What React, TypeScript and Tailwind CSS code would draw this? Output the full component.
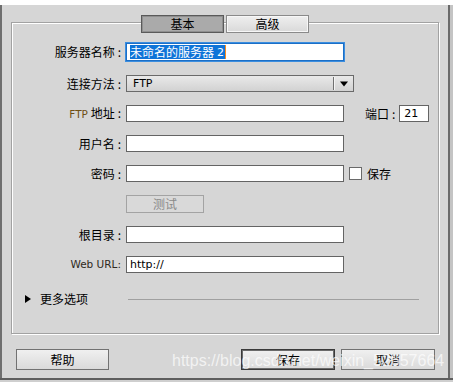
export default function App() {
  const lat = "font-['DejaVu_Sans',sans-serif]";
  return (
    <div className="relative w-[453px] h-[382px] overflow-hidden bg-[#d6d6d6] font-['Noto_Sans_CJK_SC','Noto_Sans',sans-serif] text-[12px] leading-none text-black flex flex-col">
      <div className="h-[5px] shrink-0 bg-white" />
      <div className="flex flex-1 min-h-0">
        <div className="w-[2px] bg-[#6f6f6f]" />
        <div className="flex-1 flex flex-col">
          {/* group frame */}
          <div className="ml-[9px] mt-[17px] w-[428px] h-[312px] border border-[#a2a2a2] shadow-[1px_1px_0_#ffffff,inset_1px_1px_0_#ffffff] flex flex-col">
            {/* tabs */}
            <div className="-mt-[8px] flex justify-center gap-[2px]">
              <div className="w-[83px] h-[18px] flex items-center justify-center bg-[#aaaaaa] border border-[#5a5a5a] shadow-[inset_0_0_0_1px_#8f8f8f]">基本</div>
              <div className="w-[83px] h-[18px] flex items-center justify-center bg-gradient-to-b from-[#efefef] to-[#d9d9d9] border border-[#8a8a8a] shadow-[inset_0_0_0_1px_#f7f7f7]">高级</div>
            </div>

            {/* row 1 */}
            <div className="mt-[10px] h-[18px] flex items-center">
              <div className="w-[109px] text-right">服务器名称<span className="ml-[3px]">:</span></div>
              <div className="ml-[5px] w-[218px] h-[18px] bg-white border border-[#1c6fc6] ring-1 ring-[#3b8ee0] flex items-center pl-[3px]">
                <span className="h-[14px] bg-[#0f74d8] text-white flex items-center pr-[1px]">未命名的服务器 <span className={`${lat} text-[11px] ml-[3px]`}>2</span></span>
                <span className="w-[1px] h-[14px] bg-[#ff8c1a]" />
              </div>
            </div>

            {/* row 2 select */}
            <div className="mt-[14px] h-[17px] flex items-center">
              <div className="w-[109px] text-right">连接方法<span className="ml-[3px]">:</span></div>
              <div className="ml-[5px] w-[228px] h-[17px] border border-[#6a6a6a] bg-gradient-to-b from-[#e9e9e9] to-[#d2d2d2] flex items-center">
                <span className={`${lat} text-[11px] pl-[6px] flex-1`}>FTP</span>
                <span className="w-[1px] h-[13px] bg-[#707070]" />
                <span className="w-[1px] h-[13px] bg-[#f4f4f4]" />
                <svg width="18" height="6" viewBox="0 0 18 6" className="shrink-0">
                  <path d="M5 0.5 H13 L9 5.5 Z" fill="#000" />
                </svg>
              </div>
            </div>

            {/* row 3 */}
            <div className="mt-[13px] h-[17px] flex items-center">
              <div className="w-[109px] text-right">
                <span className={`${lat} text-[10.5px] text-[#6e4f14]`}>FTP</span> 地址<span className="ml-[3px]">:</span>
              </div>
              <div className="ml-[5px] w-[218px] h-[17px] bg-white border border-[#646464]" />
              <div className="ml-[21px]">端口<span className="ml-[3px]">:</span></div>
              <div className={`ml-[4px] w-[30px] h-[17px] bg-white border border-[#646464] flex items-center pl-[4px] ${lat} text-[11px]`}>21</div>
            </div>

            {/* row 4 */}
            <div className="mt-[13px] h-[17px] flex items-center">
              <div className="w-[109px] text-right">用户名<span className="ml-[3px]">:</span></div>
              <div className="ml-[5px] w-[218px] h-[17px] bg-white border border-[#646464]" />
            </div>

            {/* row 5 */}
            <div className="mt-[13px] h-[17px] flex items-center">
              <div className="w-[109px] text-right">密码<span className="ml-[3px]">:</span></div>
              <div className="ml-[5px] w-[218px] h-[17px] bg-white border border-[#646464]" />
              <div className="ml-[5px] w-[13px] h-[13px] bg-white border border-[#6a6a6a]" />
              <div className="ml-[5px]">保存</div>
            </div>

            {/* test button */}
            <div className="mt-[13px] h-[18px] flex items-center">
              <div className="w-[109px]" />
              <div className="ml-[5px] w-[78px] h-[18px] border border-[#a3a3a3] bg-[#d9d9d9] flex items-center justify-center text-[#8a8a8a]">测试</div>
            </div>

            {/* row 6 */}
            <div className="mt-[13px] h-[17px] flex items-center">
              <div className="w-[109px] text-right">根目录<span className="ml-[3px]">:</span></div>
              <div className="ml-[5px] w-[218px] h-[17px] bg-white border border-[#646464]" />
            </div>

            {/* row 7 */}
            <div className="mt-[13px] h-[17px] flex items-center">
              <div className={`w-[109px] text-right ${lat} text-[10.5px] text-[#2f2a22]`}>Web URL:</div>
              <div className={`ml-[5px] w-[218px] h-[17px] bg-white border border-[#646464] flex items-center pl-[3px] ${lat} text-[11px]`}>http://</div>
            </div>

            {/* more options */}
            <div className="mt-[19px] h-[14px] flex items-center">
              <svg width="6" height="8" viewBox="0 0 6 8" className="ml-[13px] shrink-0">
                <path d="M0 0 L6 4 L0 8 Z" fill="#000" />
              </svg>
              <div className="ml-[9px] w-[48px]">更多选项</div>
              <div className="ml-[40px] w-[291px] h-[1px] bg-[#a0a0a0]" />
            </div>
          </div>

          {/* bottom buttons */}
          <div className="mt-[15px] h-[21px] flex items-center">
            <div className="ml-[14px] w-[93px] h-[21px] border border-[#727272] bg-gradient-to-b from-[#f0f0f0] to-[#dadada] flex items-center justify-center">帮助</div>
            <div className="ml-auto w-[94px] h-[21px] border border-[#3a3a3a] shadow-[inset_0_0_0_1px_#6a6a6a] bg-gradient-to-b from-[#f0f0f0] to-[#dadada] flex items-center justify-center">保存</div>
            <div className="ml-[6px] mr-[13px] w-[94px] h-[21px] border border-[#727272] bg-gradient-to-b from-[#f0f0f0] to-[#dadada] flex items-center justify-center">取消</div>
          </div>
        </div>
        <div className="w-[2px] bg-[#6a6a6a]" />
        <div className="w-[3px] bg-[#c4c4c4]" />
      </div>
      <div className="h-[2px] shrink-0 bg-[#5e5e5e]" />
      <div className="h-[2px] shrink-0 bg-[#cfcfcf]" />

      <div className="absolute left-[172px] top-[353px] font-['Liberation_Sans',sans-serif] text-[16px] leading-[16px] text-white/70 whitespace-nowrap pointer-events-none">
        https://blog.csdn.net/weixin_52657664
      </div>
    </div>
  );
}
